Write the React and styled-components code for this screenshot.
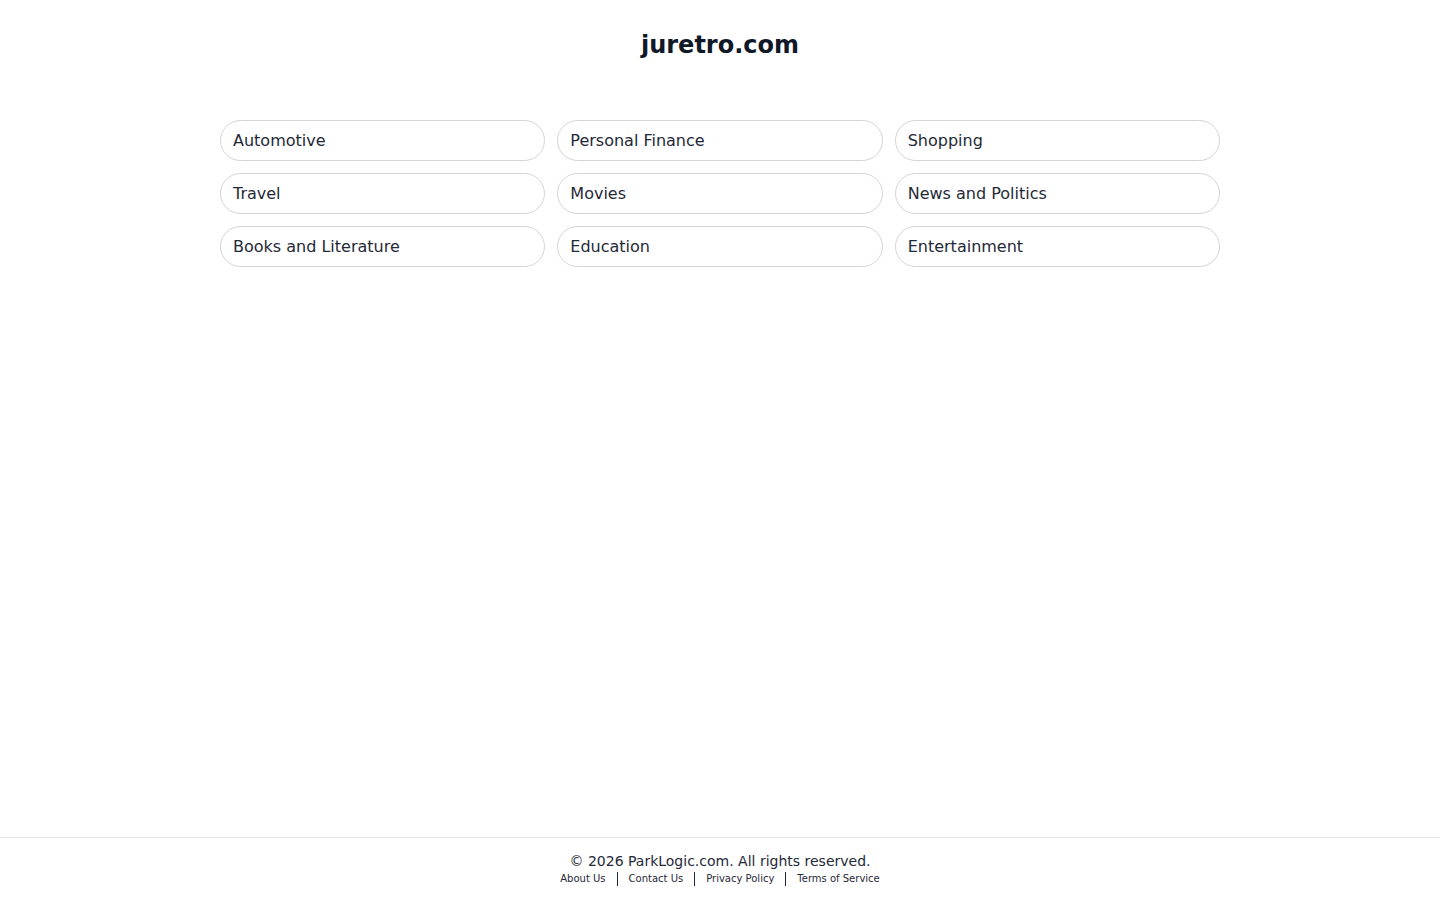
import React from 'react';
import styled, { createGlobalStyle } from 'styled-components';

const GlobalStyle = createGlobalStyle`
    html, body {
        margin: 0;
        padding: 0;
        background: #ffffff;
        font-family: "DejaVu Sans", "Liberation Sans", sans-serif;
    }
`;

const Page = styled.div`
    min-height: 100vh;
    display: flex;
    flex-direction: column;
`;

const Main = styled.main`
    flex: 1;
    display: flex;
    flex-direction: column;
    align-items: center;
    padding-top: 29px;
`;

const Title = styled.h1`
    margin: 0;
    font-size: 24px;
    line-height: 32px;
    font-weight: 700;
    color: #111827;
`;

const Grid = styled.div`
    margin-top: 59px;
    width: 1000px;
    display: grid;
    grid-template-columns: repeat(3, 1fr);
    gap: 12px;
`;

const Pill = styled.a`
    display: flex;
    align-items: center;
    height: 41px;
    box-sizing: border-box;
    padding: 0 12px;
    border: 1px solid #d4d4d8;
    border-radius: 9999px;
    font-size: 16px;
    color: #1f2937;
    text-decoration: none;
    cursor: pointer;
`;

const Footer = styled.footer`
    border-top: 1px solid #e5e7eb;
    padding: 13px 0 13px;
    display: flex;
    flex-direction: column;
    align-items: center;
`;

const Copy = styled.p`
    margin: 0;
    font-size: 14px;
    line-height: 20px;
    color: #1f2937;
`;

const Links = styled.nav`
    display: flex;
    align-items: center;
    line-height: 16px;
`;

const FootLink = styled.a`
    font-size: 10px;
    color: #1f2937;
    text-decoration: none;
`;

const Sep = styled.span`
    width: 1px;
    height: 14px;
    background: #1f2937;
    margin: 0 11px;
`;

const categories = [
    'Automotive', 'Personal Finance', 'Shopping',
    'Travel', 'Movies', 'News and Politics',
    'Books and Literature', 'Education', 'Entertainment',
];

const footerLinks = ['About Us', 'Contact Us', 'Privacy Policy', 'Terms of Service'];

function App() {
    return (
        <Page>
            <GlobalStyle />
            <Main>
                <Title>juretro.com</Title>
                <Grid>
                    {categories.map(c => <Pill key={c}>{c}</Pill>)}
                </Grid>
            </Main>
            <Footer>
                <Copy>© 2026 ParkLogic.com. All rights reserved.</Copy>
                <Links>
                    {footerLinks.map((l, i) => (
                        <React.Fragment key={l}>
                            {i > 0 && <Sep />}
                            <FootLink>{l}</FootLink>
                        </React.Fragment>
                    ))}
                </Links>
            </Footer>
        </Page>
    );
}

export default App;
